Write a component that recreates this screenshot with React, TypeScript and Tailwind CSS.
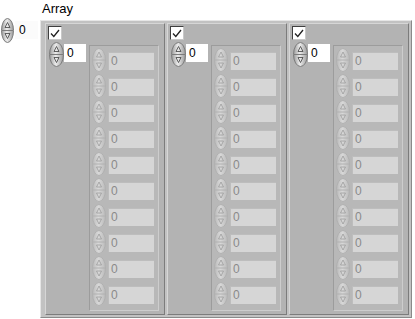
import React, { useId } from "react";

function Spinner({ w, h, disabled }: { w: number; h: number; disabled?: boolean }) {
  const id = useId().replace(/:/g, "");
  const edge = disabled ? "#b0b0b0" : "#7c7c7c";
  const mid = disabled ? "#d8d8d8" : "#ececec";
  const side = disabled ? "#bababa" : "#9a9a9a";
  const tri = disabled ? "#9c9c9c" : "#404040";
  const cx = w / 2;
  const cy = h / 2;
  return (
    <svg width={w} height={h} viewBox={`0 0 ${w} ${h}`} className="block shrink-0">
      <defs>
        <linearGradient id={`g${id}`} x1="0" x2="1" y1="0" y2="0">
          <stop offset="0" stopColor={side} />
          <stop offset="0.45" stopColor={mid} />
          <stop offset="1" stopColor={side} />
        </linearGradient>
      </defs>
      <ellipse cx={cx} cy={cy} rx={cx - 0.5} ry={cy - 0.5} fill={`url(#g${id})`} stroke={edge} strokeWidth="1" />
      <line x1={1} y1={cy} x2={w - 1} y2={cy} stroke={edge} strokeWidth="1" />
      <path d={`M${cx} ${cy - 8} L${cx - 2.5} ${cy - 3} H${cx + 2.5} Z`} fill="none" stroke={tri} strokeWidth="0.8" />
      <path d={`M${cx} ${cy + 8} L${cx - 2.5} ${cy + 3} H${cx + 2.5} Z`} fill="none" stroke={tri} strokeWidth="0.8" />
    </svg>
  );
}

function Checkbox() {
  return (
    <div className="w-[14px] h-[14px] bg-white border-t border-l border-[#404040] border-b-[#c8c8c8] border-r-[#c8c8c8] border-b border-r flex items-center justify-center">
      <svg width="10" height="9" viewBox="0 0 10 9" className="block">
        <path d="M1 4.5 L3.8 7.5 L9 1" fill="none" stroke="#202020" strokeWidth="1.3" />
      </svg>
    </div>
  );
}

function Element() {
  return (
    <div className="flex h-[26px] items-start">
      <Spinner w={14} h={24} disabled />
      <div className="ml-[2px] mt-[4px] w-[46px] h-[18px] bg-[#d6d6d6] border-t border-l border-[#bdbdbd] text-[#8a8a8a] text-[12px] leading-[16px] pl-[2px]">
        0
      </div>
    </div>
  );
}

function Cluster() {
  return (
    <div className="w-[120px] h-[292px] bg-[#b3b3b3] border border-t-[#d6d6d6] border-l-[#d6d6d6] border-b-[#7c7c7c] border-r-[#7c7c7c] pl-[2px] pt-[2px]">
      <Checkbox />
      <div className="flex items-start mt-[2px]">
        <div className="ml-[1px]">
          <Spinner w={15} h={25} />
        </div>
        <div className="mt-[2px] w-[22px] h-[18px] bg-white text-black text-[12px] leading-[18px] pl-[3px]">0</div>
        <div className="ml-[3px] mt-[3px] w-[70px] h-[266px] bg-[#b8b8b8] border border-t-[#9c9c9c] border-l-[#9c9c9c] border-b-[#cdcdcd] border-r-[#cdcdcd] pl-[2px] pt-[2px]">
          {Array.from({ length: 10 }).map((_, i) => (
            <Element key={i} />
          ))}
        </div>
      </div>
    </div>
  );
}

export default function App() {
  return (
    <div
      className="w-[415px] h-[319px] bg-white flex items-start overflow-hidden"
      style={{ fontFamily: '"Liberation Sans", Arial, sans-serif' }}
    >
      <div className="mt-[18px] ml-[1px] flex items-start">
        <Spinner w={13} h={25} />
        <div className="ml-[1px] mt-[3px] w-[23px] h-[18px] bg-[#fbfbfb] text-black text-[12px] leading-[18px] pl-[4px]">0</div>
      </div>
      <div className="ml-[2px] flex flex-col">
        <div className="h-[20px] pl-[2px] text-[13px] leading-[18px] text-black">Array</div>
        <div className="w-[372px] h-[298px] bg-[#c2c2c2] border border-t-[#e6e6e6] border-l-[#e6e6e6] border-b-[#8a8a8a] border-r-[#8a8a8a] pl-[4px] pt-[2px] flex gap-[2px]">
          <Cluster />
          <Cluster />
          <Cluster />
        </div>
      </div>
    </div>
  );
}
